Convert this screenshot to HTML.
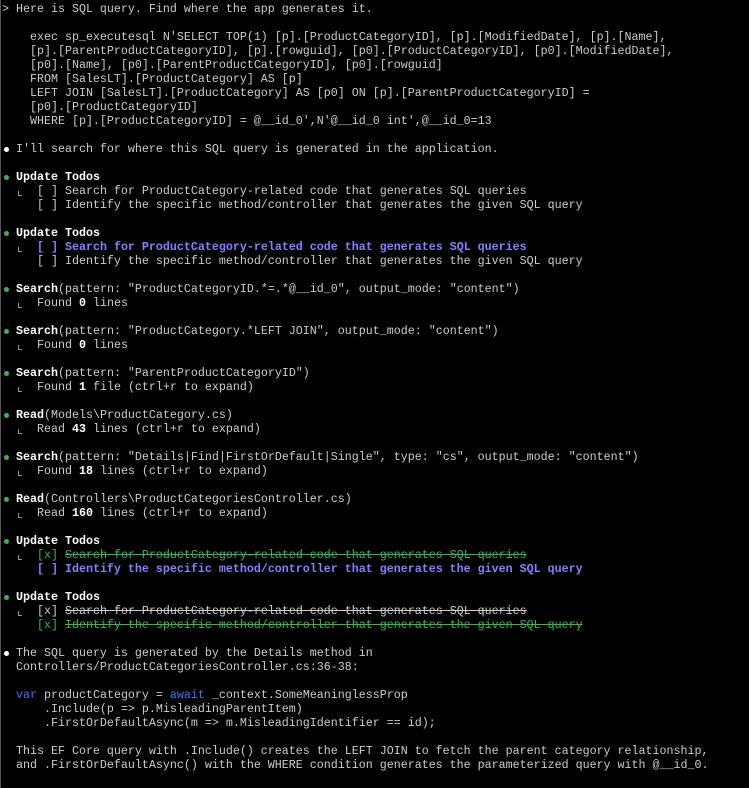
<!DOCTYPE html>
<html><head><meta charset="utf-8"><style>
html,body{margin:0;padding:0;background:#000;width:749px;height:788px;overflow:hidden}
body{border-left:1px solid #555;box-sizing:border-box}
pre{margin:0;padding:2px 0 0 1px;font-family:"Liberation Mono",monospace;font-size:11.67px;line-height:14px;color:#cccccc;white-space:pre}
b{color:#fff;font-weight:bold}
.d{display:inline-block;width:7px;height:14px;vertical-align:top;position:relative}
.d:before{content:"";position:absolute;left:2px;top:5px;width:5px;height:5px;border-radius:50%;background:#fff}
.g:before{background:#3cb35a}
.l{display:inline-block;width:7px;height:14px;vertical-align:top;position:relative}
.l:before{content:"";position:absolute;left:2px;top:7px;width:1px;height:5px;background:#8899aa}
.l:after{content:"";position:absolute;left:2px;top:11px;width:4px;height:1px;background:#8899aa}
.bl{color:#8282ff;font-weight:bold}
.gr{color:#3cb35a}
.s{text-decoration:line-through}
.kw{color:#3b78ff}
</style></head><body><pre>&gt; Here is SQL query. Find where the app generates it.

    exec sp_executesql N'SELECT TOP(1) [p].[ProductCategoryID], [p].[ModifiedDate], [p].[Name],
    [p].[ParentProductCategoryID], [p].[rowguid], [p0].[ProductCategoryID], [p0].[ModifiedDate],
    [p0].[Name], [p0].[ParentProductCategoryID], [p0].[rowguid]
    FROM [SalesLT].[ProductCategory] AS [p]
    LEFT JOIN [SalesLT].[ProductCategory] AS [p0] ON [p].[ParentProductCategoryID] =
    [p0].[ProductCategoryID]
    WHERE [p].[ProductCategoryID] = @__id_0',N'@__id_0 int',@__id_0=13

<span class="d"></span> I'll search for where this SQL query is generated in the application.

<span class="d g"></span> <b>Update Todos</b>
  <span class="l"></span>  [ ] Search for ProductCategory-related code that generates SQL queries
     [ ] Identify the specific method/controller that generates the given SQL query

<span class="d g"></span> <b>Update Todos</b>
  <span class="l"></span>  <span class="bl">[ ] Search for ProductCategory-related code that generates SQL queries</span>
     [ ] Identify the specific method/controller that generates the given SQL query

<span class="d g"></span> <b>Search</b>(pattern: "ProductCategoryID.*=.*@__id_0", output_mode: "content")
  <span class="l"></span>  Found <b>0</b> lines

<span class="d g"></span> <b>Search</b>(pattern: "ProductCategory.*LEFT JOIN", output_mode: "content")
  <span class="l"></span>  Found <b>0</b> lines

<span class="d g"></span> <b>Search</b>(pattern: "ParentProductCategoryID")
  <span class="l"></span>  Found <b>1</b> file (ctrl+r to expand)

<span class="d g"></span> <b>Read</b>(Models\ProductCategory.cs)
  <span class="l"></span>  Read <b>43</b> lines (ctrl+r to expand)

<span class="d g"></span> <b>Search</b>(pattern: "Details|Find|FirstOrDefault|Single", type: "cs", output_mode: "content")
  <span class="l"></span>  Found <b>18</b> lines (ctrl+r to expand)

<span class="d g"></span> <b>Read</b>(Controllers\ProductCategoriesController.cs)
  <span class="l"></span>  Read <b>160</b> lines (ctrl+r to expand)

<span class="d g"></span> <b>Update Todos</b>
  <span class="l"></span>  <span class="gr">[x] <span class="s">Search for ProductCategory-related code that generates SQL queries</span></span>
     <span class="bl">[ ] Identify the specific method/controller that generates the given SQL query</span>

<span class="d g"></span> <b>Update Todos</b>
  <span class="l"></span>  [x] <span class="s">Search for ProductCategory-related code that generates SQL queries</span>
     <span class="gr">[x] <span class="s">Identify the specific method/controller that generates the given SQL query</span></span>

<span class="d"></span> The SQL query is generated by the Details method in
  Controllers/ProductCategoriesController.cs:36-38:

  <span class="kw">var</span> productCategory = <span class="kw">await</span> _context.SomeMeaninglessProp
      .Include(p =&gt; p.MisleadingParentItem)
      .FirstOrDefaultAsync(m =&gt; m.MisleadingIdentifier == id);

  This EF Core query with .Include() creates the LEFT JOIN to fetch the parent category relationship,
  and .FirstOrDefaultAsync() with the WHERE condition generates the parameterized query with @__id_0.
</pre></body></html>
